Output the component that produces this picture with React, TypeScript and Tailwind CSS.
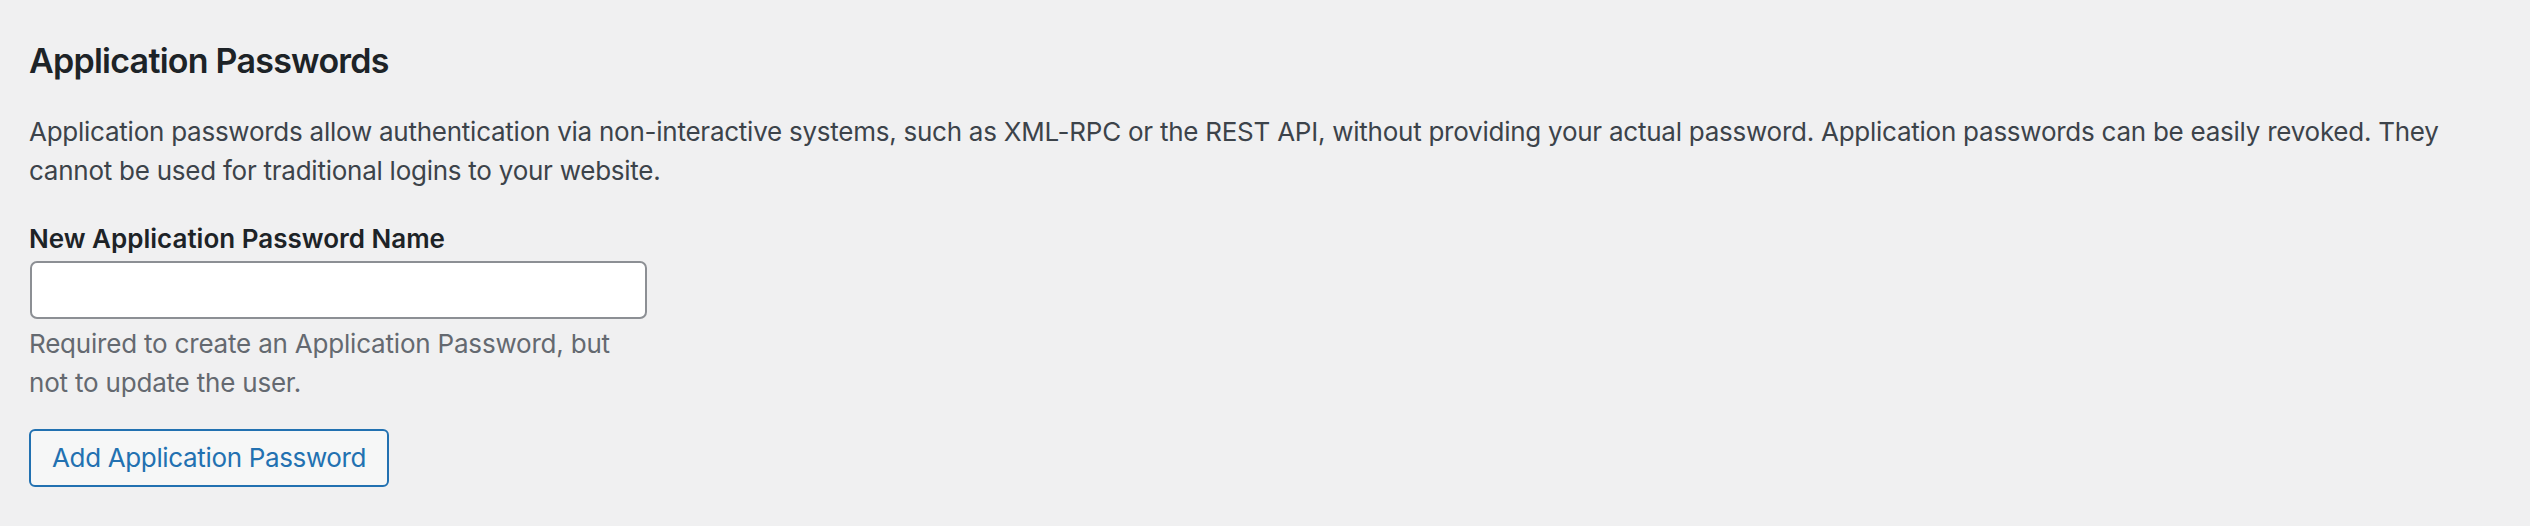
import React from 'react';

const font = { fontFamily: 'Inter, "Noto Sans", sans-serif' };

export default function App() {
  return (
    <div className="min-h-screen bg-[#f0f0f1] pl-[29px] pr-[40px]" style={font}>
      <h2 className="pt-[37px] text-[34px] font-semibold leading-[47px] tracking-[-0.75px] text-[#1d2327]">
        Application Passwords
      </h2>

      <p className="mt-[28px] max-w-[2460px] text-[26px] leading-[39px] tracking-[-0.25px] text-[#3c434a]">
        Application passwords allow authentication via non-interactive systems, such as XML-RPC or the REST API, without
        providing your actual password. Application passwords can be easily revoked. They cannot be used for traditional
        logins to your website.
      </p>

      <div className="mt-[29px] w-[620px]">
        <label
          htmlFor="new_application_password_name"
          className="block text-[26px] font-semibold leading-[39px] text-[#1d2327]"
        >
          New Application Password Name
        </label>
        <input
          id="new_application_password_name"
          type="text"
          className="mt-[3px] ml-px block h-[58px] w-[617px] rounded-[7px] border-2 border-[#8c8f94] bg-white px-4 text-[26px] text-[#2c3338] outline-none"
        />
        <p className="mt-[5px] text-[26px] leading-[39px] tracking-[-0.2px] text-[#646970]">
          Required to create an Application Password, but not to update the user.
        </p>
      </div>

      <button
        type="button"
        className="mt-[27px] h-[58px] rounded-[6px] border-2 border-[#2271b1] bg-[#f6f7f7] px-[21px] text-[26px] leading-[54px] tracking-[-0.35px] text-[#2271b1]"
      >
        Add Application Password
      </button>
    </div>
  );
}
